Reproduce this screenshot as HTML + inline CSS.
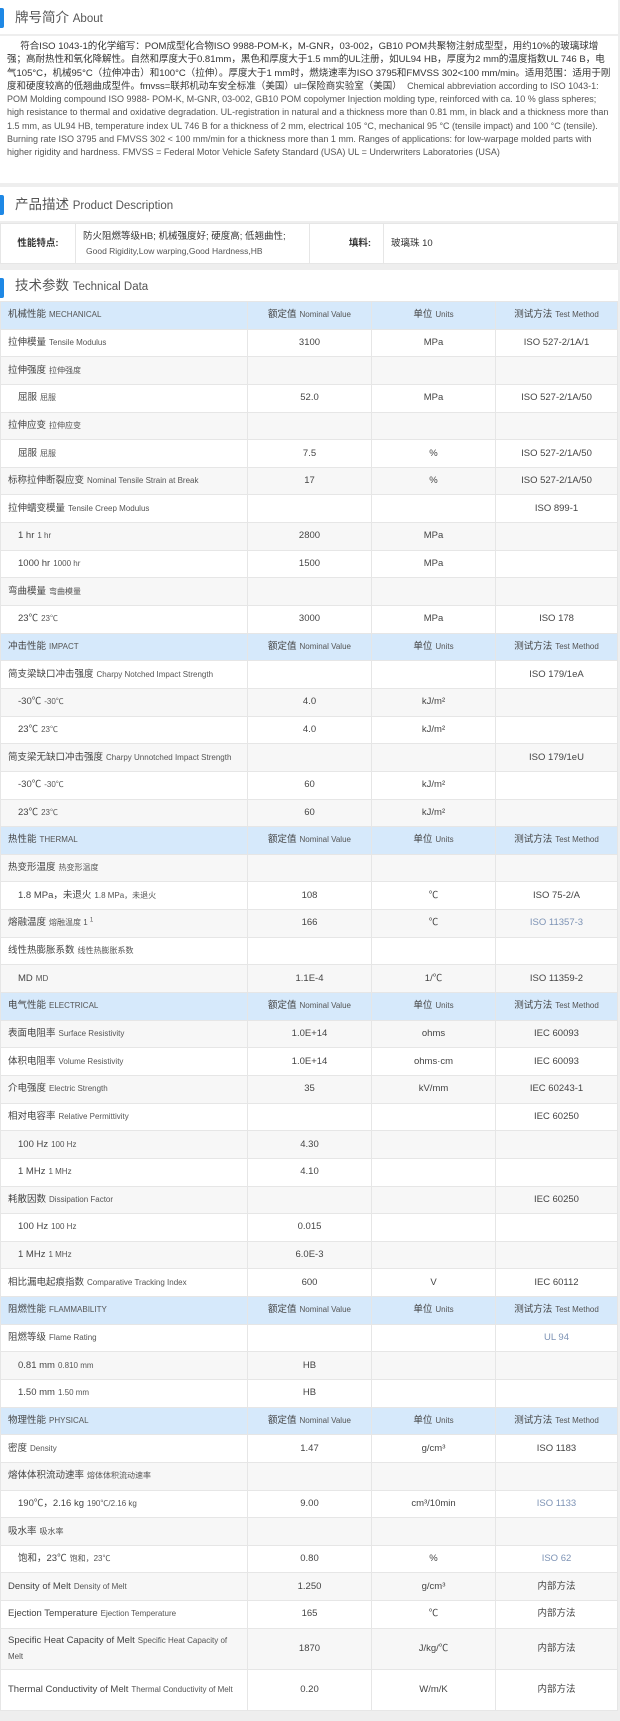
<!DOCTYPE html>
<html><head><meta charset="utf-8"><style>
*{margin:0;padding:0;box-sizing:border-box}
body{width:620px;height:1717px;background:#fff;font-family:"Liberation Sans","Noto Sans CJK SC",sans-serif;color:#333;overflow:hidden;position:relative}
.sec{position:relative;border-right:2px solid #eee;}
.h{position:relative;height:36px;line-height:36px;padding-left:15px;font-size:13.5px;color:#555;border-bottom:2px solid #eee}
.h:before{content:"";position:absolute;left:0;top:8px;width:4px;height:20px;background:#1e88e5;border-radius:0 2px 2px 0}
.h small{font-size:11.5px}
.about{padding:4px 6px 0 7px;font-size:9.5px;line-height:13.3px;height:147px;color:#333}
.about .en{color:#555;font-size:9px}
.gap{height:4px;background:#eee}
table{border-collapse:collapse;width:618px;table-layout:fixed}
td{border:1px solid #e6e6e6;font-size:9.5px;vertical-align:middle;line-height:12px;overflow:hidden}
.pd td{height:40px}
.td td{height:27.65px;text-align:center;color:#444;padding:0 4px;white-space:nowrap}
.td td:first-child{text-align:left;padding-left:7px}
.td td.i{padding-left:17px}
.td tr:nth-child(odd){background:#f7f7f7}
.td tr.hd{background:#d6e9fb}
.e{font-size:8px;color:#555;margin-left:3px;line-height:10px}
.l{color:#7d93b5!important}
.td tr.tall td{height:41px}
.td tr.tall td:first-child{white-space:normal;line-height:16px}
sup{font-size:6px;line-height:0}
</style></head><body>
<div class="sec">
<div class="h">牌号简介 <small>About</small></div>
<div class="about">&nbsp;&nbsp;&nbsp;&nbsp;&nbsp;符合ISO 1043-1的化学缩写：POM成型化合物ISO 9988-POM-K，M-GNR，03-002，GB10 POM共聚物注射成型型，用约10%的玻璃球增强；高耐热性和氧化降解性。自然和厚度大于0.81mm，黑色和厚度大于1.5 mm的UL注册，如UL94 HB，厚度为2 mm的温度指数UL 746 B，电气105°C，机械95°C（拉伸冲击）和100°C（拉伸）。厚度大于1 mm时，燃烧速率为ISO 3795和FMVSS 302&lt;100 mm/min。适用范围：适用于刚度和硬度较高的低翘曲成型件。fmvss=联邦机动车安全标准（美国）ul=保险商实验室（美国） &nbsp;<span class="en">Chemical abbreviation according to ISO 1043-1: POM Molding compound ISO 9988- POM-K, M-GNR, 03-002, GB10 POM copolymer Injection molding type, reinforced with ca. 10 % glass spheres; high resistance to thermal and oxidative degradation. UL-registration in natural and a thickness more than 0.81 mm, in black and a thickness more than 1.5 mm, as UL94 HB, temperature index UL 746 B for a thickness of 2 mm, electrical 105 °C, mechanical 95 °C (tensile impact) and 100 °C (tensile). Burning rate ISO 3795 and FMVSS 302 &lt; 100 mm/min for a thickness more than 1 mm. Ranges of applications: for low-warpage molded parts with higher rigidity and hardness. FMVSS = Federal Motor Vehicle Safety Standard (USA) UL = Underwriters Laboratories (USA)</span></div>
<div class="gap"></div>
<div class="h">产品描述 <small>Product Description</small></div>
<table class="pd"><colgroup><col style="width:75px"><col style="width:234px"><col style="width:74px"><col></colgroup>
<tr><td style="text-align:center;font-weight:bold">性能特点:</td><td style="padding-left:7px;line-height:15px">防火阻燃等级HB; 机械强度好; 硬度高; 低翘曲性;<br><span style="font-size:8.5px;color:#555;margin-left:3px">Good Rigidity,Low warping,Good Hardness,HB</span></td><td style="text-align:right;padding-right:12px;font-weight:bold">填料:</td><td style="padding-left:7px">玻璃珠 10</td></tr></table>
<div class="gap" style="height:6px"></div>
<div class="h" style="height:31px;line-height:31px;border:none">技术参数 <small>Technical Data</small></div>
<table class="td"><colgroup><col style="width:247px"><col style="width:124px"><col style="width:124px"><col></colgroup>
<tr class="hd"><td>机械性能<span class="e">MECHANICAL</span></td><td>额定值<span class="e">Nominal Value</span></td><td>单位<span class="e">Units</span></td><td>测试方法<span class="e">Test Method</span></td></tr>
<tr><td>拉伸模量<span class="e">Tensile Modulus</span></td><td>3100</td><td>MPa</td><td>ISO 527-2/1A/1</td></tr>
<tr><td>拉伸强度<span class="e">拉伸强度</span></td><td></td><td></td><td></td></tr>
<tr><td class="i">屈服<span class="e">屈服</span></td><td>52.0</td><td>MPa</td><td>ISO 527-2/1A/50</td></tr>
<tr><td>拉伸应变<span class="e">拉伸应变</span></td><td></td><td></td><td></td></tr>
<tr><td class="i">屈服<span class="e">屈服</span></td><td>7.5</td><td>%</td><td>ISO 527-2/1A/50</td></tr>
<tr><td>标称拉伸断裂应变<span class="e">Nominal Tensile Strain at Break</span></td><td>17</td><td>%</td><td>ISO 527-2/1A/50</td></tr>
<tr><td>拉伸蠕变模量<span class="e">Tensile Creep Modulus</span></td><td></td><td></td><td>ISO 899-1</td></tr>
<tr><td class="i">1 hr<span class="e">1 hr</span></td><td>2800</td><td>MPa</td><td></td></tr>
<tr><td class="i">1000 hr<span class="e">1000 hr</span></td><td>1500</td><td>MPa</td><td></td></tr>
<tr><td>弯曲模量<span class="e">弯曲模量</span></td><td></td><td></td><td></td></tr>
<tr><td class="i">23℃<span class="e">23℃</span></td><td>3000</td><td>MPa</td><td>ISO 178</td></tr>
<tr class="hd"><td>冲击性能<span class="e">IMPACT</span></td><td>额定值<span class="e">Nominal Value</span></td><td>单位<span class="e">Units</span></td><td>测试方法<span class="e">Test Method</span></td></tr>
<tr><td>简支梁缺口冲击强度<span class="e">Charpy Notched Impact Strength</span></td><td></td><td></td><td>ISO 179/1eA</td></tr>
<tr><td class="i">-30℃<span class="e">-30℃</span></td><td>4.0</td><td>kJ/m²</td><td></td></tr>
<tr><td class="i">23℃<span class="e">23℃</span></td><td>4.0</td><td>kJ/m²</td><td></td></tr>
<tr><td>简支梁无缺口冲击强度<span class="e">Charpy Unnotched Impact Strength</span></td><td></td><td></td><td>ISO 179/1eU</td></tr>
<tr><td class="i">-30℃<span class="e">-30℃</span></td><td>60</td><td>kJ/m²</td><td></td></tr>
<tr><td class="i">23℃<span class="e">23℃</span></td><td>60</td><td>kJ/m²</td><td></td></tr>
<tr class="hd"><td>热性能<span class="e">THERMAL</span></td><td>额定值<span class="e">Nominal Value</span></td><td>单位<span class="e">Units</span></td><td>测试方法<span class="e">Test Method</span></td></tr>
<tr><td>热变形温度<span class="e">热变形温度</span></td><td></td><td></td><td></td></tr>
<tr><td class="i">1.8 MPa，未退火<span class="e">1.8 MPa，未退火</span></td><td>108</td><td>℃</td><td>ISO 75-2/A</td></tr>
<tr><td>熔融温度<span class="e">熔融温度 1 <sup>1</sup></span></td><td>166</td><td>℃</td><td class="l">ISO 11357-3</td></tr>
<tr><td>线性热膨胀系数<span class="e">线性热膨胀系数</span></td><td></td><td></td><td></td></tr>
<tr><td class="i">MD<span class="e">MD</span></td><td>1.1E-4</td><td>1/℃</td><td>ISO 11359-2</td></tr>
<tr class="hd"><td>电气性能<span class="e">ELECTRICAL</span></td><td>额定值<span class="e">Nominal Value</span></td><td>单位<span class="e">Units</span></td><td>测试方法<span class="e">Test Method</span></td></tr>
<tr><td>表面电阻率<span class="e">Surface Resistivity</span></td><td>1.0E+14</td><td>ohms</td><td>IEC 60093</td></tr>
<tr><td>体积电阻率<span class="e">Volume Resistivity</span></td><td>1.0E+14</td><td>ohms·cm</td><td>IEC 60093</td></tr>
<tr><td>介电强度<span class="e">Electric Strength</span></td><td>35</td><td>kV/mm</td><td>IEC 60243-1</td></tr>
<tr><td>相对电容率<span class="e">Relative Permittivity</span></td><td></td><td></td><td>IEC 60250</td></tr>
<tr><td class="i">100 Hz<span class="e">100 Hz</span></td><td>4.30</td><td></td><td></td></tr>
<tr><td class="i">1 MHz<span class="e">1 MHz</span></td><td>4.10</td><td></td><td></td></tr>
<tr><td>耗散因数<span class="e">Dissipation Factor</span></td><td></td><td></td><td>IEC 60250</td></tr>
<tr><td class="i">100 Hz<span class="e">100 Hz</span></td><td>0.015</td><td></td><td></td></tr>
<tr><td class="i">1 MHz<span class="e">1 MHz</span></td><td>6.0E-3</td><td></td><td></td></tr>
<tr><td>相比漏电起痕指数<span class="e">Comparative Tracking Index</span></td><td>600</td><td>V</td><td>IEC 60112</td></tr>
<tr class="hd"><td>阻燃性能<span class="e">FLAMMABILITY</span></td><td>额定值<span class="e">Nominal Value</span></td><td>单位<span class="e">Units</span></td><td>测试方法<span class="e">Test Method</span></td></tr>
<tr><td>阻燃等级<span class="e">Flame Rating</span></td><td></td><td></td><td class="l">UL 94</td></tr>
<tr><td class="i">0.81 mm<span class="e">0.810 mm</span></td><td>HB</td><td></td><td></td></tr>
<tr><td class="i">1.50 mm<span class="e">1.50 mm</span></td><td>HB</td><td></td><td></td></tr>
<tr class="hd"><td>物理性能<span class="e">PHYSICAL</span></td><td>额定值<span class="e">Nominal Value</span></td><td>单位<span class="e">Units</span></td><td>测试方法<span class="e">Test Method</span></td></tr>
<tr><td>密度<span class="e">Density</span></td><td>1.47</td><td>g/cm³</td><td>ISO 1183</td></tr>
<tr><td>熔体体积流动速率<span class="e">熔体体积流动速率</span></td><td></td><td></td><td></td></tr>
<tr><td class="i">190℃，2.16 kg<span class="e">190℃/2.16 kg</span></td><td>9.00</td><td>cm³/10min</td><td class="l">ISO 1133</td></tr>
<tr><td>吸水率<span class="e">吸水率</span></td><td></td><td></td><td></td></tr>
<tr><td class="i">饱和，23℃<span class="e">饱和，23℃</span></td><td>0.80</td><td>%</td><td class="l">ISO 62</td></tr>
<tr><td>Density of Melt<span class="e">Density of Melt</span></td><td>1.250</td><td>g/cm³</td><td>内部方法</td></tr>
<tr><td>Ejection Temperature<span class="e">Ejection Temperature</span></td><td>165</td><td>℃</td><td>内部方法</td></tr>
<tr class="tall"><td>Specific Heat Capacity of Melt<span class="e">Specific Heat Capacity of Melt</span></td><td>1870</td><td>J/kg/℃</td><td>内部方法</td></tr>
<tr class="tall"><td>Thermal Conductivity of Melt<span class="e">Thermal Conductivity of Melt</span></td><td>0.20</td><td>W/m/K</td><td>内部方法</td></tr>
</table>
<div class="gap" style="height:10px"></div>
</div>
</body></html>
